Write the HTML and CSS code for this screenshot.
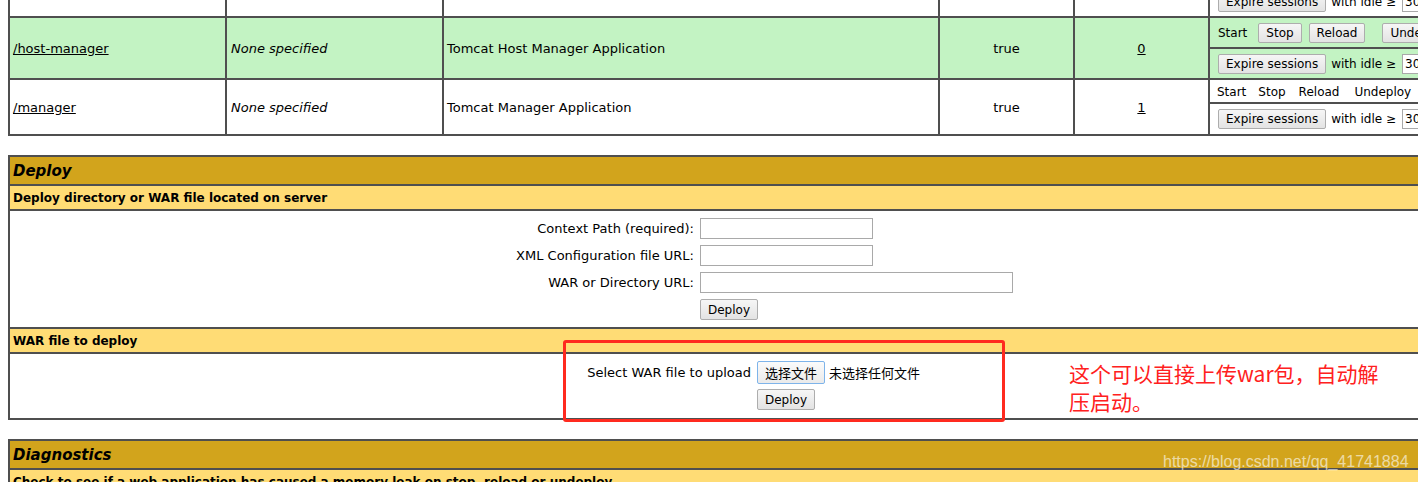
FILE: index.html
```html
<!DOCTYPE html>
<html lang="zh">
<head>
<meta charset="utf-8">
<title>Tomcat Web Application Manager</title>
<link rel="stylesheet" href="styles.css">
</head>
<body>
<div class="page">
  <table class="grid apps">
    <colgroup>
      <col class="c-path"><col class="c-ver"><col class="c-name"><col class="c-run"><col class="c-sess"><col class="c-cmd">
    </colgroup>
    <tbody>
      <tr class="r-cmd">
        <td rowspan="2" class="left"><a href="#">/examples</a></td>
        <td rowspan="2" class="left"><i>None specified</i></td>
        <td rowspan="2" class="left">Servlet and JSP Examples</td>
        <td rowspan="2" class="center">true</td>
        <td rowspan="2" class="center"><a href="#">0</a></td>
        <td class="cmd"><div class="cmds"><span class="ctext c-start">Start</span><button class="btn c-stop">Stop</button><button class="btn c-reload">Reload</button><button class="btn c-undeploy">Undeploy</button></div></td>
      </tr>
      <tr class="r-exp">
        <td class="cmd"><div class="cmds"><button class="btn c-expire">Expire sessions</button><span class="ctext c-idle">with idle ≥</span><input class="num" type="text" value="30"><span class="ctext c-min">minutes</span></div></td>
      </tr>
      <tr class="r-cmd odd">
        <td rowspan="2" class="left"><a href="#">/host-manager</a></td>
        <td rowspan="2" class="left"><i>None specified</i></td>
        <td rowspan="2" class="left">Tomcat Host Manager Application</td>
        <td rowspan="2" class="center">true</td>
        <td rowspan="2" class="center"><a href="#">0</a></td>
        <td class="cmd"><div class="cmds"><span class="ctext c-start">Start</span><button class="btn c-stop">Stop</button><button class="btn c-reload">Reload</button><button class="btn c-undeploy">Undeploy</button></div></td>
      </tr>
      <tr class="r-exp odd">
        <td class="cmd"><div class="cmds"><button class="btn c-expire">Expire sessions</button><span class="ctext c-idle">with idle ≥</span><input class="num" type="text" value="30"><span class="ctext c-min">minutes</span></div></td>
      </tr>
      <tr class="r-cmd-plain">
        <td rowspan="2" class="left"><a href="#">/manager</a></td>
        <td rowspan="2" class="left"><i>None specified</i></td>
        <td rowspan="2" class="left">Tomcat Manager Application</td>
        <td rowspan="2" class="center">true</td>
        <td rowspan="2" class="center"><a href="#">1</a></td>
        <td class="cmd"><div class="cmds plain"><span class="ctext m-start">Start</span><span class="ctext m-stop">Stop</span><span class="ctext m-reload">Reload</span><span class="ctext m-undeploy">Undeploy</span></div></td>
      </tr>
      <tr class="r-exp-last">
        <td class="cmd"><div class="cmds"><button class="btn c-expire">Expire sessions</button><span class="ctext c-idle">with idle ≥</span><input class="num" type="text" value="30"><span class="ctext c-min">minutes</span></div></td>
      </tr>
    </tbody>
  </table>

  <table class="grid section">
    <tbody>
      <tr class="r-title"><td class="title">Deploy</td></tr>
      <tr class="r-head"><td class="header">Deploy directory or WAR file located on server</td></tr>
      <tr class="r-body1"><td class="body">
        <form class="form server-form">
          <label class="lbl" for="deployPath">Context Path (required):</label><input id="deployPath" class="txt short" type="text">
          <label class="lbl" for="deployConfig">XML Configuration file URL:</label><input id="deployConfig" class="txt short" type="text">
          <label class="lbl" for="deployWar">WAR or Directory URL:</label><input id="deployWar" class="txt long" type="text">
          <span></span><button class="btn deploy-btn" type="button">Deploy</button>
        </form>
      </td></tr>
      <tr class="r-head"><td class="header">WAR file to deploy</td></tr>
      <tr class="r-body2"><td class="body">
        <form class="form upload-form">
          <span class="lbl">Select WAR file to upload</span>
          <span class="file"><button class="btn file-btn" type="button">选择文件</button><span class="file-name">未选择任何文件</span></span>
          <span></span><button class="btn deploy-btn" type="button">Deploy</button>
        </form>
      </td></tr>
    </tbody>
  </table>

  <table class="grid section">
    <tbody>
      <tr class="r-title"><td class="title">Diagnostics</td></tr>
      <tr class="r-head"><td class="header">Check to see if a web application has caused a memory leak on stop, reload or undeploy</td></tr>
      <tr class="r-body2"><td class="body"><button class="btn" type="button">Find leaks</button></td></tr>
    </tbody>
  </table>
</div>

<div class="note-box"></div>
<p class="note-text">这个可以直接上传war包，自动解<br>压启动。</p>
<div class="watermark">https://blog.csdn.net/qq_41741884</div>
</body>
</html>
```
FILE: styles.css
```css
html {
  overflow: hidden;
}
body {
  margin: 0;
  background: #fff;
  color: #000;
  font-family: "DejaVu Sans", "Noto Sans CJK SC", sans-serif;
  font-size: 13px;
}
.page {
  width: 1514px;
  margin: -46px 0 0 8px;
}
a { color: #000; }

.grid {
  border-collapse: separate;
  border-spacing: 0;
  table-layout: fixed;
  border-top: 2px solid #4f4f4f;
  border-left: 2px solid #4f4f4f;
}
.grid td {
  box-sizing: border-box;
  border-right: 2px solid #4f4f4f;
  border-bottom: 2px solid #4f4f4f;
  padding: 0 3px;
  vertical-align: middle;
}

/* applications table */
.apps { width: 1514px; }
.c-path { width: 217px; }
.c-ver { width: 217px; }
.c-name { width: 496px; }
.c-run { width: 135px; }
.c-sess { width: 135px; }
.c-cmd { width: 312px; }
.apps .left { text-align: left; }
.apps .center { text-align: center; }
.apps i { padding-left: 1px; }
.odd td { background: #c3f3c3; }
.r-cmd { height: 31px; }
.r-exp { height: 31px; }
.r-cmd-plain { height: 24px; }
.r-exp-last { height: 32px; }

.cmds {
  display: flex;
  align-items: center;
  white-space: nowrap;
  font-size: 12px;
}
.cmds.plain { padding-top: 2px; }
.ctext { line-height: 16px; }
.btn {
  box-sizing: border-box;
  height: 20px;
  padding: 0 7px;
  border: 1px solid #adadad;
  border-radius: 2px;
  background: linear-gradient(#f6f6f6, #e3e3e3);
  font-family: "DejaVu Sans", "Noto Sans CJK SC", sans-serif;
  font-size: 12px;
  color: #000;
  line-height: 16px;
}
.c-start { margin-left: 5px; }
.c-stop { margin-left: 11px; }
.c-reload { margin-left: 7px; }
.c-undeploy { margin-left: 17px; }
.c-expire { margin-left: 5px; }
.c-idle { margin-left: 5px; }
.c-min { margin-left: 4px; }
.num {
  box-sizing: border-box;
  width: 40px;
  height: 20px;
  margin-left: 6px;
  padding: 0 2px;
  border: 1px solid #a9a9a9;
  font-family: "DejaVu Sans", sans-serif;
  font-size: 12px;
}
.m-start { margin-left: 4px; }
.m-stop { margin-left: 12px; }
.m-reload { margin-left: 13px; }
.m-undeploy { margin-left: 15px; }

/* sections */
.section {
  width: 1508px;
  margin-top: 19px;
}
.r-title { height: 29px; }
.r-head { height: 25px; }
.r-body1 { height: 118px; }
.r-body2 { height: 66px; }
.title {
  background: #d2a41c;
  font-size: 15px;
  font-weight: bold;
  font-style: italic;
  padding-left: 4px;
}
.header {
  background: #ffdc75;
  font-size: 12px;
  font-weight: bold;
  padding-left: 4px;
}
.grid td.body {
  vertical-align: top;
  padding: 0;
}
.form {
  display: grid;
  justify-content: center;
  align-items: center;
  column-gap: 6px;
  grid-auto-rows: 27px;
}
.server-form {
  grid-template-columns: 190px 320px;
  padding-top: 4px;
}
.upload-form {
  grid-template-columns: 170px 186px;
  padding-top: 5px;
}
.lbl {
  justify-self: end;
  white-space: nowrap;
  font-size: 13px;
}
.txt {
  box-sizing: border-box;
  height: 21px;
  border: 1px solid #a9a9a9;
  padding: 0 2px;
  justify-self: start;
}
.txt.short { width: 173px; }
.txt.long { width: 313px; }
.deploy-btn {
  justify-self: start;
  height: 21px;
}
.file {
  display: flex;
  align-items: center;
  white-space: nowrap;
}
.file-btn {
  height: 23px;
  padding: 0 7px;
  border-color: #7eb4ea;
  background: linear-gradient(#fbfbfb, #eaeaea);
  font-size: 13px;
  font-family: "Noto Sans CJK SC", sans-serif;
}
.file-name {
  margin-left: 4px;
  font-family: "Noto Sans CJK SC", sans-serif;
  font-size: 13px;
}

/* annotations over the screenshot */
.note-box {
  position: absolute;
  left: 563px;
  top: 340px;
  width: 442px;
  height: 82px;
  box-sizing: border-box;
  border: 3px solid #ff2a1f;
  border-radius: 3px;
}
.note-text {
  position: absolute;
  left: 1069px;
  top: 359px;
  margin: 0;
  color: #ff2020;
  font-family: "Noto Sans CJK SC", sans-serif;
  font-size: 21px;
  line-height: 28px;
  white-space: nowrap;
}
.watermark {
  position: absolute;
  left: 1163px;
  top: 452px;
  color: rgba(255, 255, 255, 0.62);
  font-family: "Liberation Sans", Arial, sans-serif;
  font-size: 16px;
  line-height: 20px;
  white-space: nowrap;
}
```
